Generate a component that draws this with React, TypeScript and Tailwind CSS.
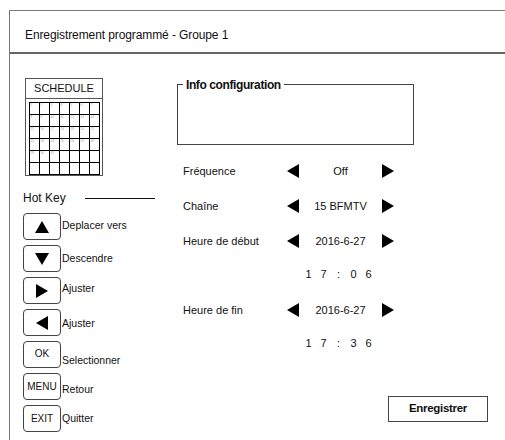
import React from 'react';

function Tri({ dir, w, h }: { dir: 'up' | 'down' | 'left' | 'right'; w: number; h: number }) {
  const pts = {
    up: `${w / 2},0 ${w},${h} 0,${h}`,
    down: `0,0 ${w},0 ${w / 2},${h}`,
    left: `${w},0 ${w},${h} 0,${h / 2}`,
    right: `0,0 ${w},${h / 2} 0,${h}`,
  }[dir];
  return (
    <svg width={w} height={h} viewBox={`0 0 ${w} ${h}`}>
      <polygon points={pts} fill="#000" />
    </svg>
  );
}

const keys: { key: React.ReactNode; label: string; lab: string }[] = [
  { key: <Tri dir="up" w={14} h={12} />, label: 'Deplacer vers', lab: 'mb-[2px]' },
  { key: <Tri dir="down" w={14} h={12} />, label: 'Descendre', lab: '' },
  { key: <Tri dir="right" w={12} h={14} />, label: 'Ajuster', lab: 'mb-[4px]' },
  { key: <Tri dir="left" w={12} h={14} />, label: 'Ajuster', lab: 'mt-[2px]' },
  { key: <span className="text-[10px] mb-[3px]">OK</span>, label: 'Selectionner', lab: 'mt-[12px]' },
  { key: <span className="text-[10px]">MENU</span>, label: 'Retour', lab: 'mt-[7px]' },
  { key: <span className="text-[10px]">EXIT</span>, label: 'Quitter', lab: '' },
];

function Row({ label, value, mt }: { label: string; value: string; mt: string }) {
  return (
    <div className={`flex items-center h-[20px] pl-[6px] ${mt}`}>
      <div className="w-[104px] text-[11px]">{label}</div>
      <Tri dir="left" w={12} h={14} />
      <div className="w-[83px] text-center text-[11px]">{value}</div>
      <Tri dir="right" w={12} h={14} />
    </div>
  );
}

function Time({ digits, mt }: { digits: string[]; mt: string }) {
  return (
    <div className={`flex items-center h-[20px] ${mt}`}>
      <div className="ml-[124px] flex text-[11px]">
        {digits.map((d, i) => (
          <span key={i} className="w-[15px] text-center">{d}</span>
        ))}
      </div>
    </div>
  );
}

export default function App() {
  const cells = Array.from({ length: 42 }, (_, i) => (i < 31 ? i + 1 : null));

  return (
    <div className="w-[505px] h-[440px] bg-white overflow-hidden pl-[9px] pt-[10px] font-['Liberation_Sans',Arial,sans-serif] text-[#111]">
      <div className="h-full border-l border-t border-[#777] flex flex-col">
        <div className="h-[43px] shrink-0 border-b-2 border-[#666] flex items-center pl-[15px] pt-[6px] text-[12px] tracking-[-0.1px]">
          Enregistrement programmé - Groupe 1
        </div>

        <div className="flex flex-1">
          {/* left column */}
          <div className="w-[167px] shrink-0 pl-[13px]">
            <div className="ml-[2px] mt-[24px] w-[78px] h-[98px] border border-[#555] flex flex-col">
              <div className="h-[22px] border-b border-[#555] flex items-center justify-center text-[11px]">SCHEDULE</div>
              <div className="mx-auto mt-[3px] w-[71px] grid grid-cols-7 border-t border-l border-black">
                {cells.map((d, i) => (
                  <div key={i} className="h-[12px] border-r border-b border-black text-[3px] leading-[4px] pl-[1px] text-[#999]">
                    {d ?? ''}
                  </div>
                ))}
              </div>
            </div>

            <div className="mt-[15px] flex items-center h-[14px]">
              <span className="text-[12px] w-[62px]">Hot Key</span>
              <div className="w-[70px] border-t border-[#111]" />
            </div>

            <div className="mt-[8px] flex flex-col gap-[5px]">
              {keys.map((k, i) => (
                <div key={i} className="flex items-center h-[27px]">
                  <div className="w-[38px] h-[27px] border border-[#444] rounded-[4px] flex items-center justify-center shrink-0">
                    {k.key}
                  </div>
                  <span className={`ml-[1px] text-[10.5px] ${k.lab}`}>{k.label}</span>
                </div>
              ))}
            </div>
          </div>

          {/* right column */}
          <div className="flex-1 flex flex-col">
            <div className="relative mt-[30px] w-[237px] h-[61px] border border-[#444]">
              <span className="absolute -top-[8px] left-[5px] bg-white px-[3px] text-[12px] font-bold tracking-[-0.4px] leading-[16px]">
                Info configuration
              </span>
            </div>

            <Row label="Fréquence" value="Off" mt="mt-[16px]" />
            <Row label="Chaîne" value="15 BFMTV" mt="mt-[15px]" />
            <Row label="Heure de début" value="2016-6-27" mt="mt-[15px]" />
            <Time digits={['1', '7', ':', '0', '6']} mt="mt-[13px]" />
            <Row label="Heure de fin" value="2016-6-27" mt="mt-[16px]" />
            <Time digits={['1', '7', ':', '3', '6']} mt="mt-[13px]" />

            <button className="mt-[43px] ml-[211px] w-[100px] h-[26px] border border-[#444] text-[11.5px] font-bold tracking-[-0.3px] bg-white">
              Enregistrer
            </button>
          </div>
        </div>
      </div>
    </div>
  );
}
